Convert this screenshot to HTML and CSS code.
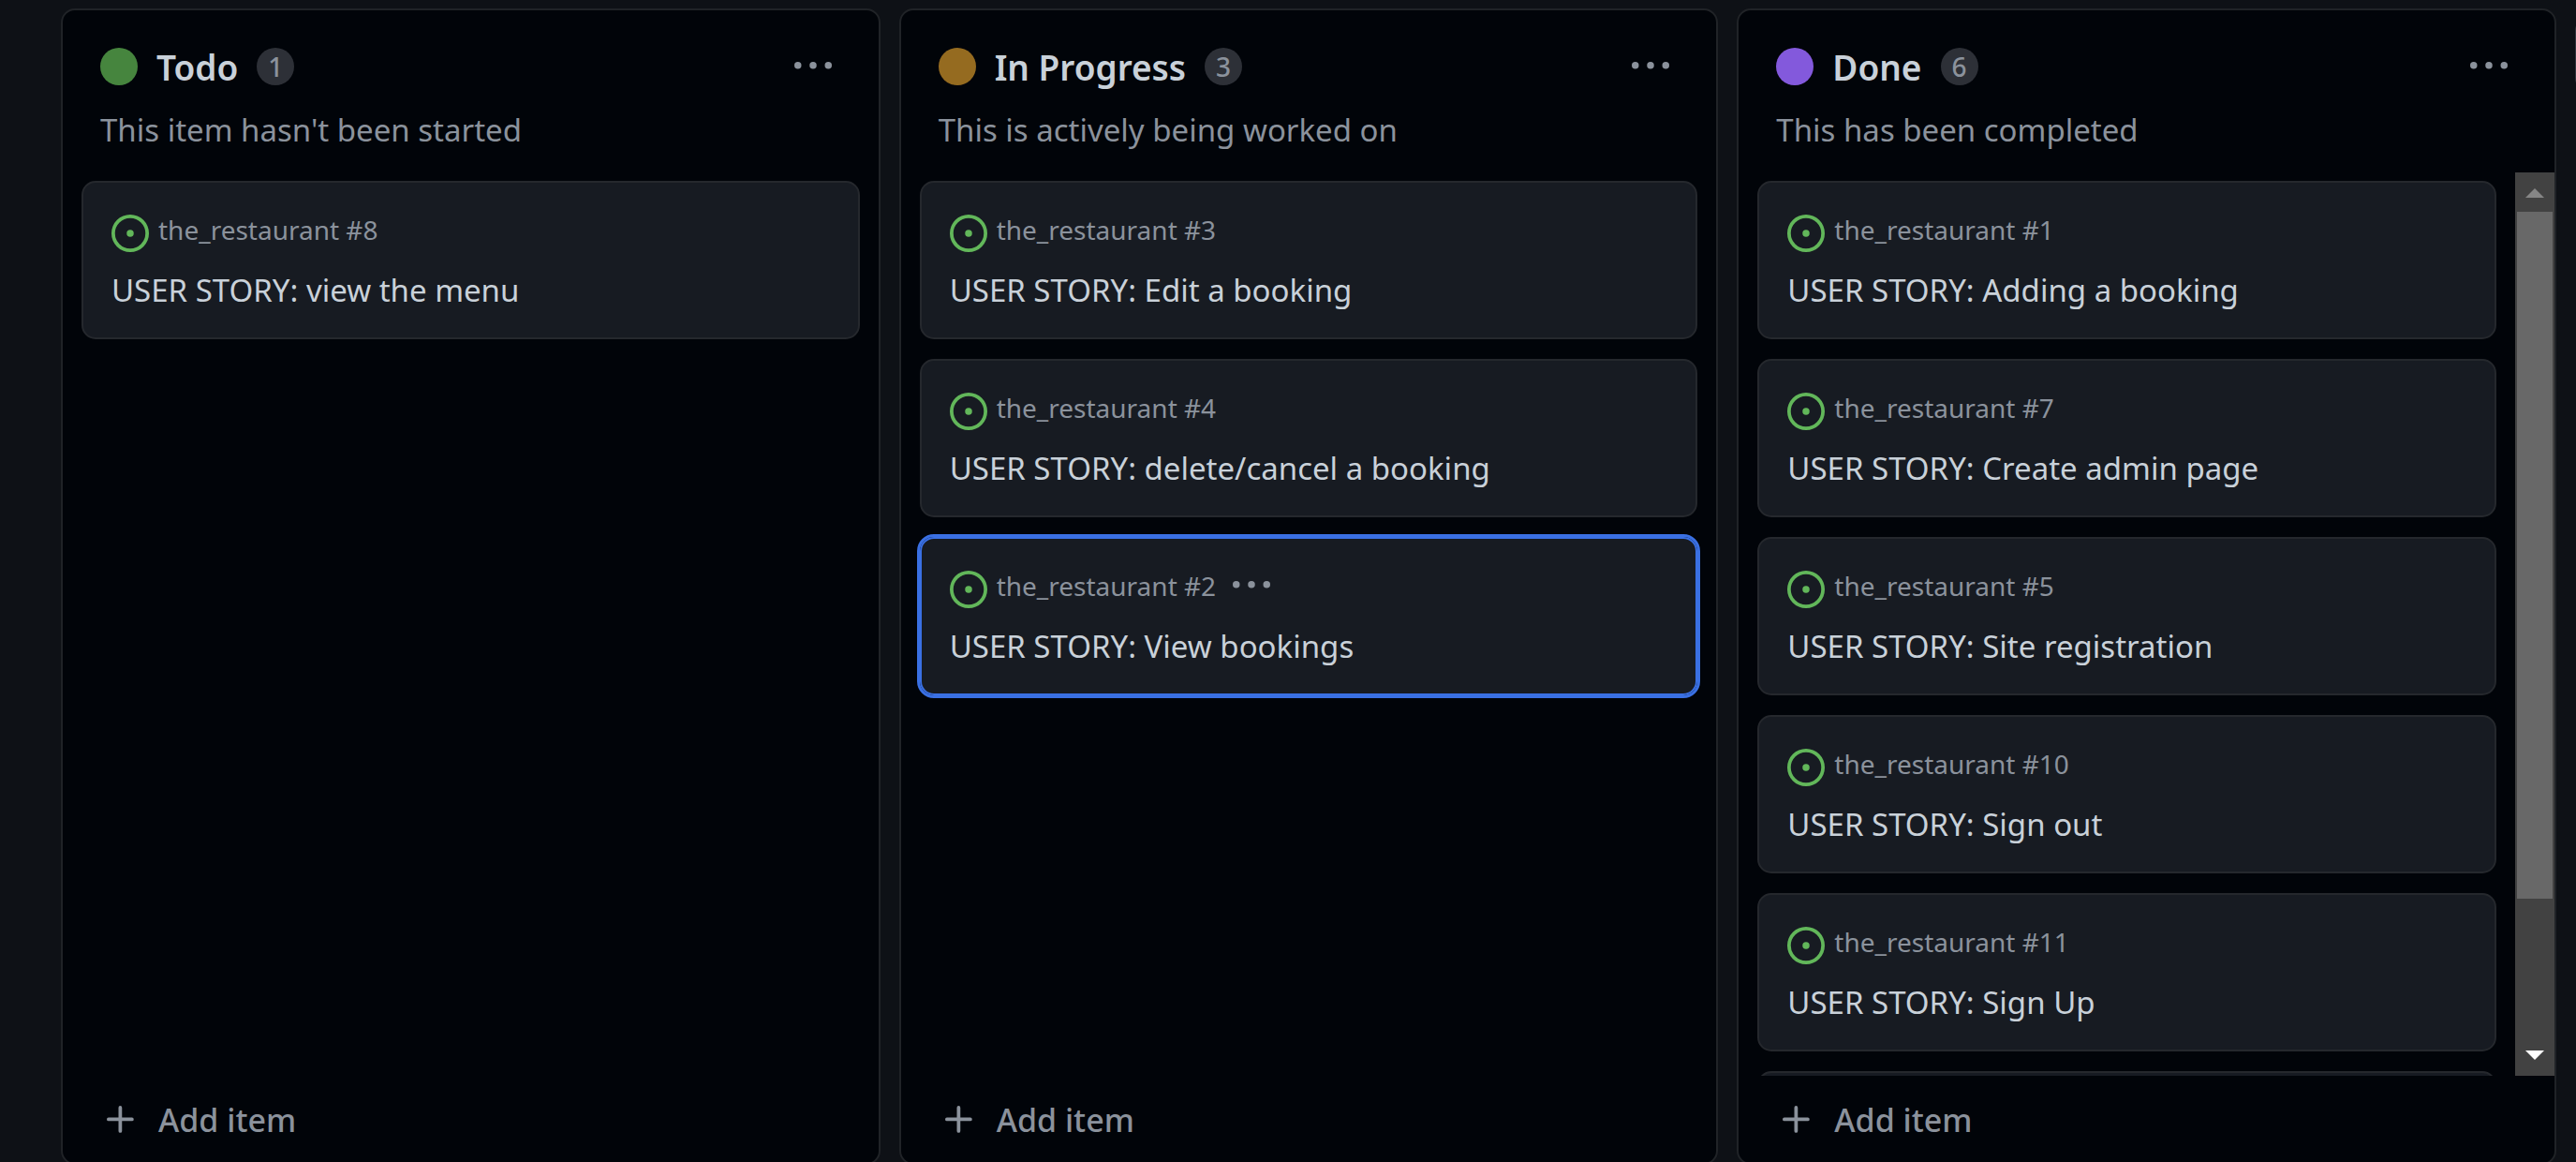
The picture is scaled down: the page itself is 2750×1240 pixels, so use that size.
FILE: index.html
```html
<!DOCTYPE html>
<html lang="en">
<head>
<meta charset="utf-8">
<meta name="viewport" content="width=device-width, initial-scale=1">
<title>Project board</title>
<link rel="stylesheet" href="styles.css">
</head>
<body>
<svg class="sprite">
  <symbol id="open" viewBox="0 0 16 16"><path d="M8 9.5a1.5 1.5 0 1 0 0-3 1.5 1.5 0 0 0 0 3Z"/><path d="M8 0a8 8 0 1 1 0 16A8 8 0 0 1 8 0ZM1.5 8a6.5 6.5 0 1 0 13 0 6.5 6.5 0 0 0-13 0Z"/></symbol>
  <symbol id="dots" viewBox="0 0 16 16"><path d="M8 9a1.5 1.5 0 1 0 0-3 1.5 1.5 0 0 0 0 3ZM1.5 9a1.5 1.5 0 1 0 0-3 1.5 1.5 0 0 0 0 3Zm13 0a1.5 1.5 0 1 0 0-3 1.5 1.5 0 0 0 0 3Z"/></symbol>
  <symbol id="plus" viewBox="0 0 16 16"><path d="M7.75 2a.75.75 0 0 1 .75.75V7h4.25a.75.75 0 0 1 0 1.5H8.5v4.25a.75.75 0 0 1-1.5 0V8.5H2.75a.75.75 0 0 1 0-1.5H7V2.75A.75.75 0 0 1 7.75 2Z"/></symbol>
</svg>
<main class="board">
  <section class="column">
    <header class="column-header">
      <div class="heading">
        <span class="dot dot-green"></span>
        <h2 class="title">Todo</h2>
        <span class="count">1</span>
        <button class="icon-button menu" aria-label="Todo actions"><svg class="icon"><use href="#dots"/></svg></button>
      </div>
      <p class="description">This item hasn't been started</p>
    </header>
    <div class="list">
      <ul class="cards">
        <li class="card"><div class="meta"><svg class="icon open"><use href="#open"/></svg><span>the_restaurant #8</span></div><a class="name" href="#8">USER STORY: view the menu</a></li>
      </ul>
    </div>
    <button class="add"><svg class="icon"><use href="#plus"/></svg>Add item</button>
  </section>
  <section class="column">
    <header class="column-header">
      <div class="heading">
        <span class="dot dot-amber"></span>
        <h2 class="title">In Progress</h2>
        <span class="count">3</span>
        <button class="icon-button menu" aria-label="In Progress actions"><svg class="icon"><use href="#dots"/></svg></button>
      </div>
      <p class="description">This is actively being worked on</p>
    </header>
    <div class="list">
      <ul class="cards">
        <li class="card"><div class="meta"><svg class="icon open"><use href="#open"/></svg><span>the_restaurant #3</span></div><a class="name" href="#3">USER STORY: Edit a booking</a></li>
        <li class="card"><div class="meta"><svg class="icon open"><use href="#open"/></svg><span>the_restaurant #4</span></div><a class="name" href="#4">USER STORY: delete/cancel a booking</a></li>
        <li class="card selected"><div class="meta"><svg class="icon open"><use href="#open"/></svg><span>the_restaurant #2</span><button class="icon-button card-menu" aria-label="Card actions"><svg class="icon"><use href="#dots"/></svg></button></div><a class="name" href="#2">USER STORY: View bookings</a></li>
      </ul>
    </div>
    <button class="add"><svg class="icon"><use href="#plus"/></svg>Add item</button>
  </section>
  <section class="column">
    <header class="column-header">
      <div class="heading">
        <span class="dot dot-purple"></span>
        <h2 class="title">Done</h2>
        <span class="count">6</span>
        <button class="icon-button menu" aria-label="Done actions"><svg class="icon"><use href="#dots"/></svg></button>
      </div>
      <p class="description">This has been completed</p>
    </header>
    <div class="list">
      <ul class="cards">
        <li class="card"><div class="meta"><svg class="icon open"><use href="#open"/></svg><span>the_restaurant #1</span></div><a class="name" href="#1">USER STORY: Adding a booking</a></li>
        <li class="card"><div class="meta"><svg class="icon open"><use href="#open"/></svg><span>the_restaurant #7</span></div><a class="name" href="#7">USER STORY: Create admin page</a></li>
        <li class="card"><div class="meta"><svg class="icon open"><use href="#open"/></svg><span>the_restaurant #5</span></div><a class="name" href="#5">USER STORY: Site registration</a></li>
        <li class="card"><div class="meta"><svg class="icon open"><use href="#open"/></svg><span>the_restaurant #10</span></div><a class="name" href="#10">USER STORY: Sign out</a></li>
        <li class="card"><div class="meta"><svg class="icon open"><use href="#open"/></svg><span>the_restaurant #11</span></div><a class="name" href="#11">USER STORY: Sign Up</a></li>
        <li class="card"></li>
      </ul>
      <div class="scrollbar">
        <svg class="arrow arrow-up" viewBox="0 0 42 42"><path d="M21 17 31 27H11Z"/></svg>
        <div class="thumb"></div>
        <div class="track"></div>
        <svg class="arrow arrow-down" viewBox="0 0 42 42"><path d="M11 15H31L21 25Z"/></svg>
      </div>
    </div>
    <button class="add"><svg class="icon"><use href="#plus"/></svg>Add item</button>
  </section>
  <button class="new-column" aria-label="Add column"></button>
</main>
</body>
</html>
```
FILE: styles.css
```css
* { box-sizing: border-box; }

body {
  margin: 0;
  height: 100vh;
  overflow: hidden;
  background: #0e1116;
  color: #c9d1d9;
  font-family: "Noto Sans", "Open Sans", sans-serif;
}

button {
  padding: 0;
  border: 0;
  background: none;
  color: inherit;
  font: inherit;
  cursor: pointer;
}

.sprite { display: none; }

.board {
  display: grid;
  grid-template-columns: repeat(3, 1fr) 1px;
  gap: 20px;
  height: calc(100vh + 3px);
  padding: 9px 0 0 65px;
}

.column {
  display: flex;
  flex-direction: column;
  min-width: 0;
  min-height: 0;
  border: 2px solid #202327;
  border-radius: 15px;
  background: #010409;
}

.column-header { padding: 38px 40px 0; }

.heading {
  display: flex;
  align-items: center;
  height: 44px;
}

.dot {
  width: 40px;
  height: 40px;
  margin-right: 20px;
  border-radius: 50%;
}

.dot-green { background: #46853e; }
.dot-amber { background: #956b20; }
.dot-purple { background: #8359dc; }

.title {
  margin: 0;
  padding-top: 2px;
  font-size: 37px;
  font-weight: 600;
  line-height: 44px;
}

.count {
  width: 40px;
  height: 40px;
  margin-left: 20px;
  border-radius: 20px;
  background: #2d3037;
  color: #8b929c;
  font-size: 28px;
  font-weight: 500;
  line-height: 40px;
  text-align: center;
}

.icon {
  display: block;
  flex: none;
  width: 40px;
  height: 40px;
  fill: currentColor;
}

.icon-button { color: #8b929c; }
.menu { margin: 0 10px 0 auto; }

.description {
  margin: 24px 0 0;
  color: #8b929c;
  font-size: 33px;
  line-height: 44px;
}

.list {
  display: flex;
  flex: 1;
  min-height: 0;
  margin-top: 23px;
  overflow: hidden;
}

.cards {
  display: flex;
  flex: 1;
  flex-direction: column;
  gap: 21px;
  min-width: 0;
  margin: 0;
  padding: 9px 20px 0;
  list-style: none;
}

.card {
  flex: none;
  height: 169px;
  padding: 30px;
  border: 2px solid #25282d;
  border-radius: 15px;
  background: #171b22;
}

.selected {
  border-color: #3a70e3;
  outline: 3px solid #3a70e3;
}

.meta {
  display: flex;
  align-items: flex-start;
  gap: 10px;
  height: 44px;
  color: #8b929c;
  font-size: 28px;
  line-height: 40px;
}

.open {
  align-self: flex-end;
  color: #62b75a;
}

.card-menu { margin-left: 8px; }

.name {
  display: block;
  margin-top: 19px;
  color: #c9d1d9;
  font-size: 33px;
  line-height: 44px;
  text-decoration: none;
}

.add {
  display: flex;
  align-items: center;
  gap: 20px;
  flex: none;
  height: 93px;
  padding: 0 42px;
  color: #8b929c;
  font-size: 34px;
  font-weight: 500;
}

.new-column {
  width: 80px;
  height: 80px;
  margin-top: 9px;
  border: 2px solid #30363d;
  border-radius: 15px;
}

.scrollbar {
  display: flex;
  flex-direction: column;
  width: 42px;
  background: #424242;
}

.arrow { flex: none; width: 42px; height: 42px; }
.arrow-up { fill: #868686; }
.arrow-down { fill: #fff; }
.thumb { flex: 5; margin: 0 2px; background: #686868; }
.track { flex: 1; }
```
